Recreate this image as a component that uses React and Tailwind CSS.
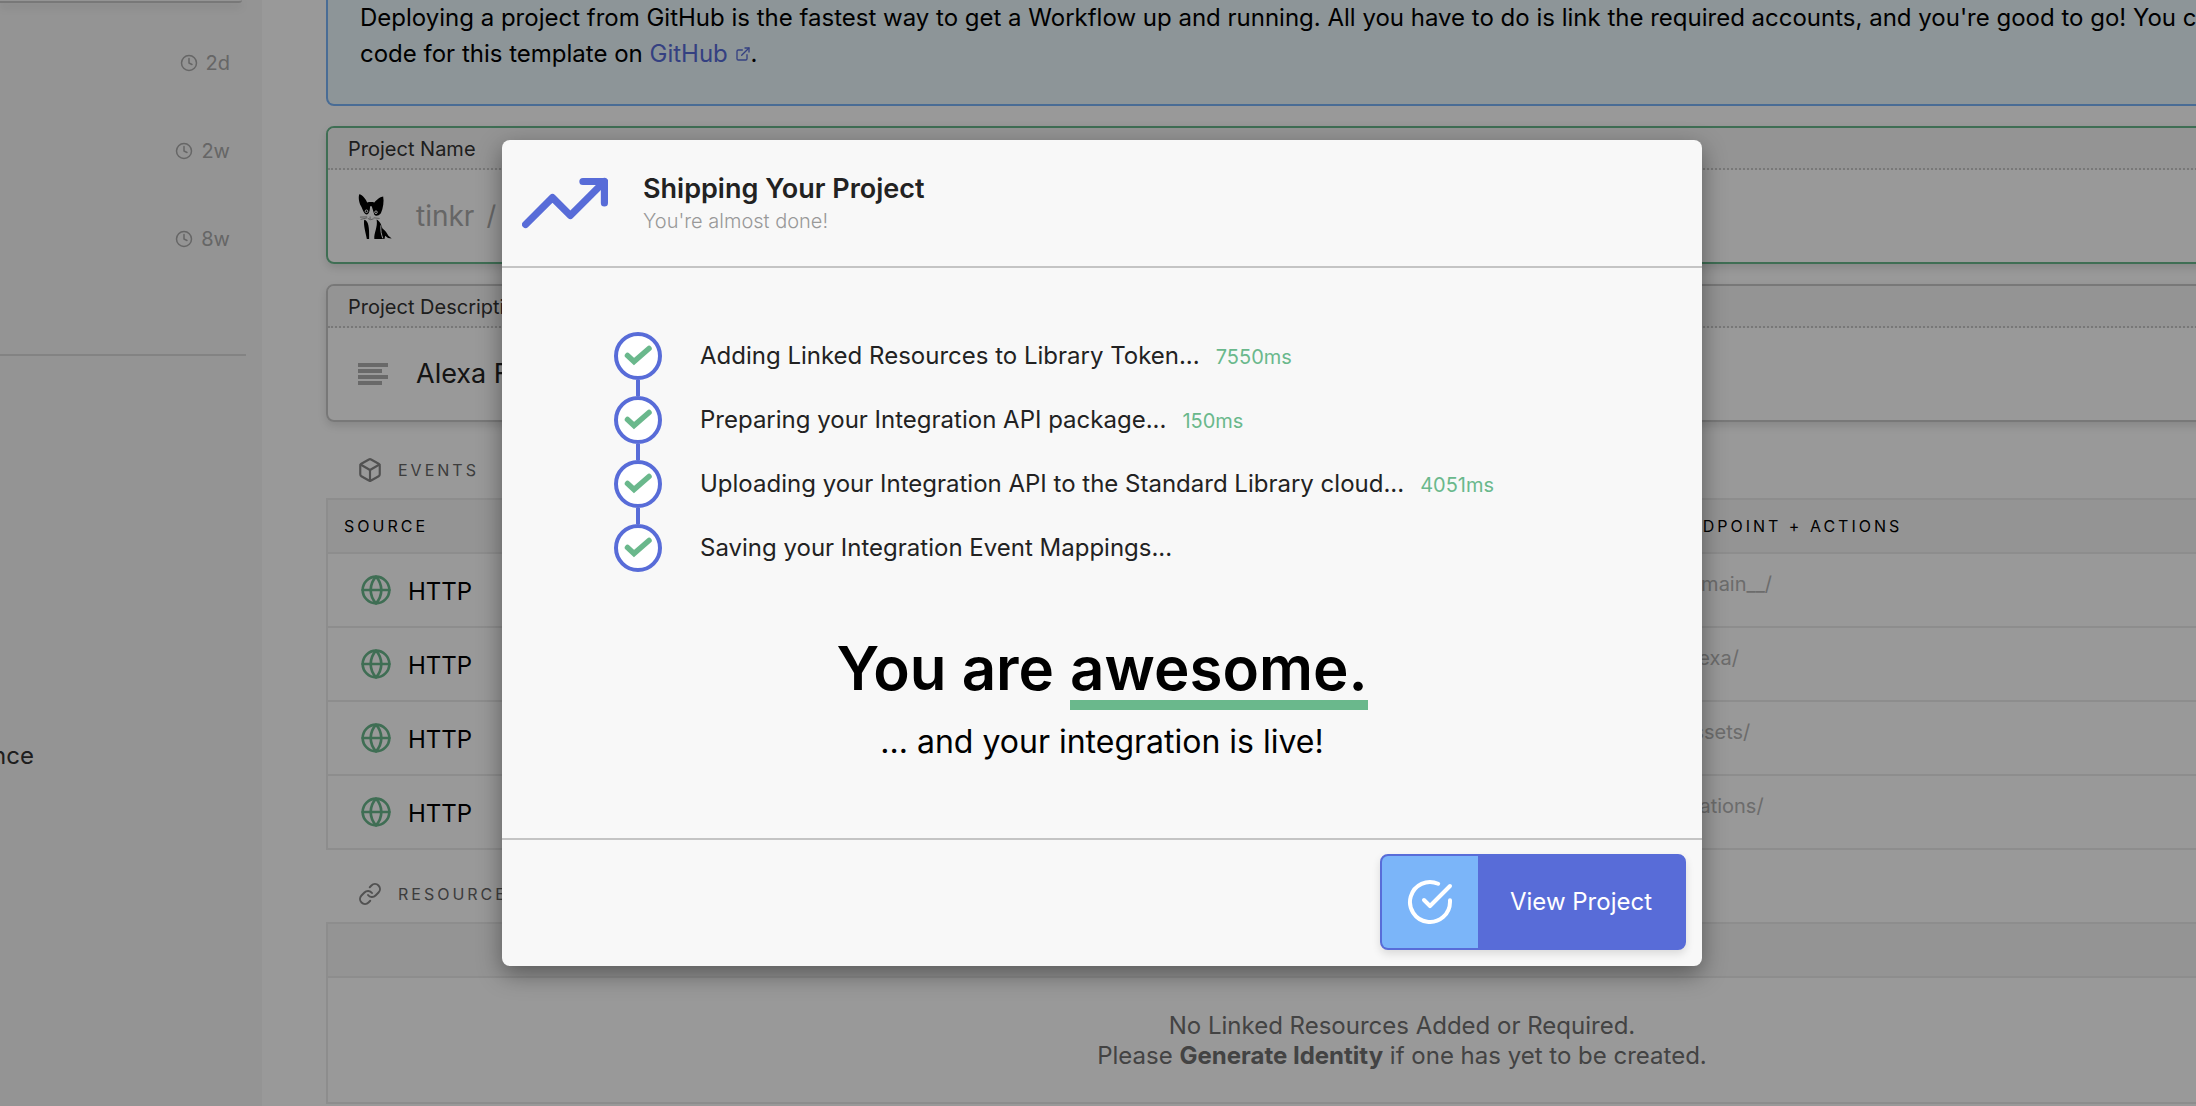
import React from "react";
import {
  FiBox,
  FiCheckCircle,
  FiClock,
  FiExternalLink,
  FiGlobe,
  FiLink,
  FiTrendingUp,
} from "react-icons/fi";

const recent = ["2d", "2w", "8w"];

const endpoints = ["/__main__/", "/alexa/", "/assets/", "/stations/"];

const steps = [
  { label: "Adding Linked Resources to Library Token...", time: "7550ms" },
  { label: "Preparing your Integration API package...", time: "150ms" },
  {
    label: "Uploading your Integration API to the Standard Library cloud...",
    time: "4051ms",
  },
  { label: "Saving your Integration Event Mappings..." },
];

function CatAvatar() {
  return (
    <svg viewBox="120 40 104 142" className="h-[47px] w-[34px]" aria-hidden="true">
      <path d="M124 43C130 42 142 54 148 68C155 66 163 66 170 68C178 59 190 50 197 50C200 65 197 86 190 101C184 109 174 111 170 106L162 80L157 80C157 94 152 107 146 105C137 102 135 90 129 79C122 66 121 50 124 43Z" />
      <circle cx="146" cy="95" r="4" fill="none" stroke="#fff" strokeWidth="3" />
      <circle cx="175" cy="98" r="4" fill="none" stroke="#fff" strokeWidth="3" />
      <path
        d="M126 113L148 112M128 120L148 115M168 115L186 117M150 117Q158 124 168 118M157 111V120"
        fill="none"
        stroke="#999"
        strokeWidth="3"
      />
      <path d="M139 121C152 123 155 145 154 180H147C144 160 136 140 139 121Z" />
      <path d="M177 120C188 126 191 136 195 148C204 154 209 164 213 170L223 178L212 177L203 170L201 180H170C168 160 181 145 177 120Z" />
      <path d="M190 138C189 155 191 165 196 178" fill="none" stroke="#fff" strokeWidth="3" />
    </svg>
  );
}

function TextLines() {
  return (
    <svg viewBox="0 0 30 22" className="h-[22px] w-[30px]" aria-hidden="true">
      <path d="M0 2H30M0 8H24M0 14H30M0 20H24" stroke="#b0b0b0" strokeWidth="4" />
    </svg>
  );
}

function Field({ label, id, icon, accent, children }) {
  return (
    <div
      className={`overflow-hidden rounded-lg border-2 shadow-[0_4px_8px_rgba(0,0,0,0.12)] ${
        accent ? "border-[#6ab88c]" : "border-[#c8c8c8]"
      }`}
    >
      <label
        htmlFor={id}
        className="flex h-[42px] items-center border-b-2 border-dotted border-[#c8c8c8] bg-[#f7f7f7] px-5 pt-[2px] text-xl text-[#333]"
      >
        {label}
      </label>
      <div className="flex h-[92px] items-center gap-6 pl-[30px] text-[27px]">
        <span className="flex w-[34px] items-center">{icon}</span>
        {children}
      </div>
    </div>
  );
}

function SectionTitle({ icon, children }) {
  return (
    <h2 className="flex h-14 items-center gap-3 pl-7 text-base tracking-[3px] text-[#666]">
      <span className="flex w-8 justify-center text-[#888]">{icon}</span>
      {children}
    </h2>
  );
}

function Background() {
  return (
    <div className="flex min-h-[1106px] min-w-[2478px]">
      <aside className="w-[262px] shrink-0 bg-[#f7f7f7]">
        <div className="mr-5 h-[3px] rounded-br-lg border-b-2 border-[#c8c8c8] shadow-[0_4px_8px_rgba(0,0,0,0.15)]" />
        <ul className="mr-4 h-[353px] border-b-2 border-[#dadada] pt-4">
          {recent.map((age) => (
            <li
              key={age}
              className="flex h-[88px] items-center justify-end gap-2 pr-4 text-xl text-[#aaa]"
            >
              <FiClock size={18} />
              {age}
            </li>
          ))}
        </ul>
        <a href="#reference" className="mt-[382px] -ml-2 block text-2xl leading-9 text-[#333]">
          nce
        </a>
      </aside>

      <main className="flex-1 bg-white pl-16">
        <section className="rounded-b-lg border-x-2 border-b-2 border-[#7bb5f9] bg-[#ebf8fd] px-8 pb-8 text-2xl leading-9">
          <p>
            Deploying a project from GitHub is the fastest way to get a Workflow up and running.
            All you have to do is link the required accounts, and you're good to go! You can find
            the source
            <br />
            code for this template on{" "}
            <a href="#github" className="text-[#586cd8]">
              GitHub <FiExternalLink size={16} className="inline align-baseline" />
            </a>
            .
          </p>
        </section>

        <div className="mt-5 flex flex-col gap-5">
          <Field label="Project Name" id="name" accent icon={<CatAvatar />}>
            <span className="text-[28px] text-[#aaa]">tinkr</span>
            <input
              id="name"
              defaultValue="/"
              className="-ml-3 min-w-0 flex-1 bg-transparent text-[#aaa]"
            />
          </Field>
          <Field label="Project Description" id="description" icon={<TextLines />}>
            <input
              id="description"
              defaultValue="Alexa Flash"
              className="min-w-0 flex-1 bg-transparent text-[#222]"
            />
          </Field>
        </div>

        <div className="pt-5">
          <SectionTitle icon={<FiBox size={26} strokeWidth={2} />}>EVENTS</SectionTitle>
          <table className="w-full table-fixed border-2 border-[#ebebeb]">
            <thead>
              <tr className="h-[54px] border-b-2 border-[#ebebeb] bg-[#f7f7f7] text-left text-base tracking-[3px]">
                <th className="w-[1332px] pl-4 font-normal">SOURCE</th>
                <th className="pl-4 font-normal">ENDPOINT + ACTIONS</th>
              </tr>
            </thead>
            <tbody>
              {endpoints.map((path) => (
                <tr key={path} className="h-[74px] border-b-2 border-[#ebebeb] last:border-b-0">
                  <td className="pl-8 text-2xl">
                    <span className="flex items-center gap-4">
                      <FiGlobe size={32} className="text-[#6ab88c]" />
                      <span className="pt-1">HTTP</span>
                    </span>
                  </td>
                  <td className="pb-3 pl-4 text-xl text-[#b4b4b4]">{path}</td>
                </tr>
              ))}
            </tbody>
          </table>
        </div>

        <div className="pt-4">
          <SectionTitle icon={<FiLink size={24} />}>RESOURCES</SectionTitle>
          <div className="border-2 border-[#ebebeb]">
            <div className="h-[54px] border-b-2 border-[#ebebeb] bg-[#f7f7f7]" />
            <p className="pt-[33px] pb-[31px] text-center text-2xl leading-[30px] text-[#707070]">
              No Linked Resources Added or Required.
              <br />
              Please <strong className="font-bold">Generate Identity</strong> if one has yet to be
              created.
            </p>
          </div>
        </div>
      </main>
    </div>
  );
}

function StepCheck() {
  return (
    <span className="flex size-12 items-center justify-center rounded-full border-4 border-[#586cd8] bg-white">
      <svg viewBox="0 0 32 32" className="size-8 shrink-0" aria-hidden="true">
        <path
          d="M5.5 15.5L12 21.5L27 8.5"
          fill="none"
          stroke="#6ab88c"
          strokeWidth="5.5"
          strokeLinecap="round"
        />
      </svg>
    </span>
  );
}

function ShippingDialog() {
  return (
    <div
      role="dialog"
      aria-labelledby="ship-title"
      className="w-[1200px] rounded-lg bg-[#f8f8f8] shadow-[0_8px_24px_rgba(0,0,0,0.4)]"
    >
      <header className="flex h-32 items-center gap-[35px] border-b-2 border-[#c4c4c4] px-5">
        <FiTrendingUp size={86} className="text-[#586cd8]" />
        <div>
          <h1 id="ship-title" className="text-[27px] leading-9 font-semibold text-[#222]">
            Shipping Your Project
          </h1>
          <p className="text-xl leading-7 font-light text-[#999]">You're almost done!</p>
        </div>
      </header>

      <div className="pt-16 pb-[72px]">
        <ol className="flex flex-col gap-4 pl-28">
          {steps.map((step, i) => (
            <li key={step.label} className="flex h-12 items-center gap-[38px] text-2xl text-[#222]">
              <span className="relative">
                <StepCheck />
                {i < steps.length - 1 && (
                  <span className="absolute top-full left-[22px] h-4 w-1 bg-[#586cd8]" />
                )}
              </span>
              <span className="flex items-baseline gap-4">
                {step.label}
                {step.time && <span className="text-xl text-[#6ab88c]">{step.time}</span>}
              </span>
            </li>
          ))}
        </ol>
        <div className="mt-16 text-center text-black">
          <p className="flex justify-center gap-4 text-[60px] leading-[64px] font-semibold">
            <span>You are</span>
            <span className="border-b-10 border-[#6ab88c]">awesome.</span>
          </p>
          <p className="mt-2 text-[32px] leading-12">... and your integration is live!</p>
        </div>
      </div>

      <footer className="flex justify-end border-t-2 border-[#c4c4c4] px-4 pt-[14px] pb-4">
        <button
          type="button"
          className="flex h-24 items-stretch overflow-hidden rounded-lg border-2 border-[#586cd8] bg-[#586cd8] text-2xl text-white shadow-[0_4px_8px_rgba(0,0,0,0.12)]"
        >
          <span className="flex w-24 items-center justify-center bg-[#7bb5f9]">
            <FiCheckCircle size={48} />
          </span>
          <span className="flex items-center px-8">View Project</span>
        </button>
      </footer>
    </div>
  );
}

export default function App() {
  return (
    <div className="relative h-screen overflow-hidden font-[Inter,sans-serif] text-black">
      <Background />
      <div className="absolute inset-0 flex items-start justify-center bg-black/40 pt-[140px] pl-2">
        <ShippingDialog />
      </div>
    </div>
  );
}
